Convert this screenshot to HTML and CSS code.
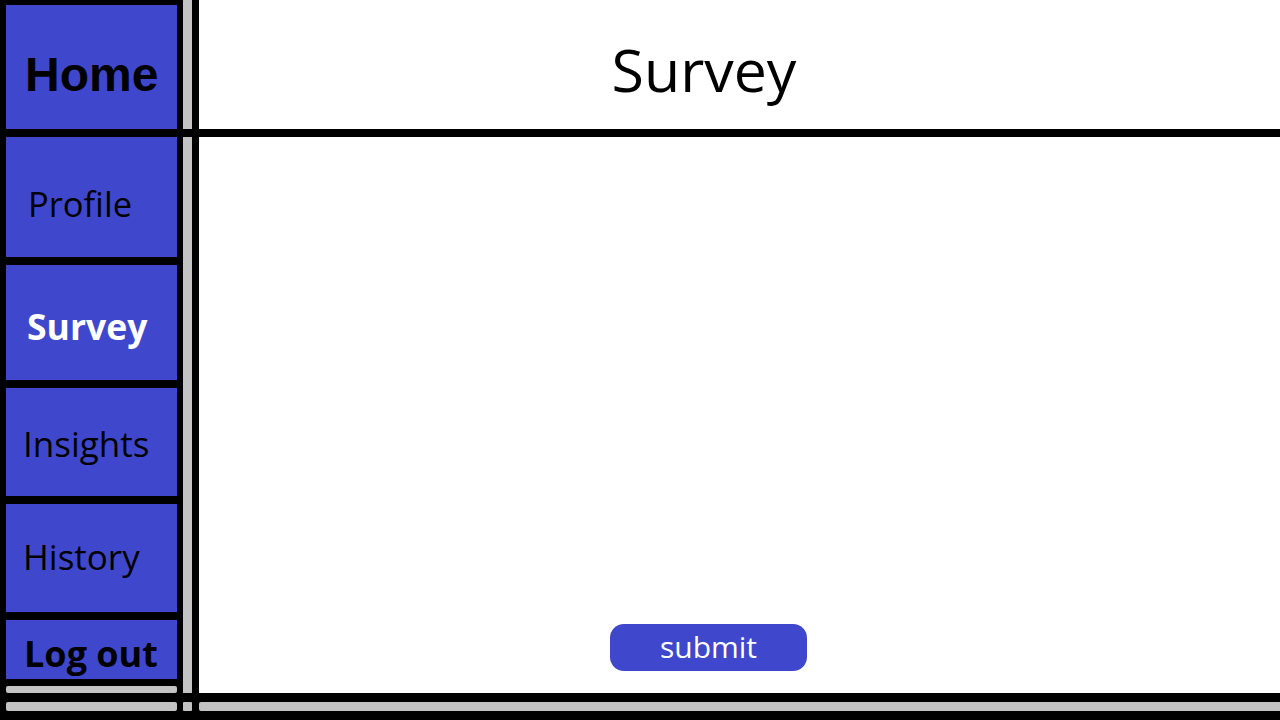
FILE: index.html
```html
<!DOCTYPE html>
<html lang="en">
<head>
<meta charset="utf-8">
<title>Survey</title>
<link rel="stylesheet" href="styles.css">
</head>
<body>
<div class="app">
  <nav class="sidebar">
    <a class="nav-item nav-home">Home</a>
    <a class="nav-item nav-profile">Profile</a>
    <a class="nav-item nav-survey">Survey</a>
    <a class="nav-item nav-insights">Insights</a>
    <a class="nav-item nav-history">History</a>
    <a class="nav-item nav-logout">Log out</a>
    <div class="sidebar-bars">
      <div class="bar bar-thin"></div>
      <div class="bar"></div>
    </div>
  </nav>
  <div class="content">
    <div class="row row-header">
      <div class="rail"></div>
      <header class="title-cell"><h1 class="title">Survey</h1></header>
    </div>
    <div class="row row-main">
      <div class="rail"></div>
      <main class="main-cell">
        <button class="submit" type="button">submit</button>
      </main>
    </div>
    <div class="row row-footer">
      <div class="rail"></div>
      <div class="footer-bar"></div>
    </div>
  </div>
</div>
</body>
</html>
```

FILE: styles.css
```css
html, body {
  margin: 0;
  padding: 0;
  background: #000;
}

.app {
  display: flex;
  width: 1280px;
  height: 720px;
  background: #000;
  font-family: "Open Sans", "Noto Sans", sans-serif;
  overflow: hidden;
}

/* Sidebar */
.sidebar {
  width: 171px;
  flex: none;
  padding: 5px 6px 9px 6px;
  display: flex;
  flex-direction: column;
  gap: 8px;
}

.nav-item {
  background: #3f48cc;
  color: #000;
  display: flex;
  align-items: center;
  font-size: 34px;
  line-height: 1;
  box-sizing: border-box;
  white-space: nowrap;
}

.nav-home {
  height: 124px;
  font-family: "Liberation Sans", Arial, sans-serif;
  font-weight: 700;
  font-size: 48px;
  padding: 15px 0 0 19px;
}

.nav-profile {
  height: 120px;
  font-size: 34.5px;
  padding: 14px 0 0 22px;
}

.nav-survey {
  height: 115px;
  color: #fff;
  font-weight: 700;
  font-size: 35.5px;
  padding: 9px 0 0 21px;
}

.nav-insights {
  height: 108px;
  font-size: 35px;
  padding: 2px 0 0 17px;
}

.nav-history {
  height: 108px;
  font-size: 35px;
  padding: 0 0 3px 17px;
}

.nav-logout {
  height: 59px;
  font-weight: 700;
  font-size: 36px;
  padding: 8px 0 0 18px;
}

.sidebar-bars {
  display: flex;
  flex-direction: column;
  gap: 9px;
  margin-top: -1px;
}

.bar {
  height: 9px;
  background: #c3c3c3;
  border-radius: 2px;
}

.bar-thin {
  height: 7px;
}

/* Content area */
.content {
  flex: 1;
  display: flex;
  flex-direction: column;
  padding-bottom: 9px;
}

.row {
  display: flex;
  gap: 7px;
}

.row-header {
  height: 129px;
  margin-bottom: 8px;
}

.row-main {
  height: 556px;
  margin-bottom: 9px;
}

.row-footer {
  height: 9px;
}

.rail {
  width: 9px;
  flex: none;
  background: #c3c3c3;
}

.row-footer .rail {
  border-radius: 1px;
}

.title-cell {
  flex: 1;
  background: #fff;
  display: flex;
  align-items: center;
  justify-content: center;
  padding: 10px 71px 0 0;
}

.title {
  margin: 0;
  font-weight: 400;
  font-size: 59px;
  line-height: 1;
  color: #000;
}

.main-cell {
  flex: 1;
  background: #fff;
  display: flex;
  flex-direction: column;
  justify-content: flex-end;
  align-items: flex-start;
}

.submit {
  margin: 0 0 22px 411px;
  width: 197px;
  height: 47px;
  border: none;
  border-radius: 14px;
  background: #3f48cc;
  color: #fff;
  font-family: "Open Sans", "Noto Sans", sans-serif;
  font-size: 30px;
  line-height: 1;
  padding: 0 0 2px 0;
}

.footer-bar {
  flex: 1;
  background: #c3c3c3;
  border-radius: 2px 0 0 2px;
}
```
